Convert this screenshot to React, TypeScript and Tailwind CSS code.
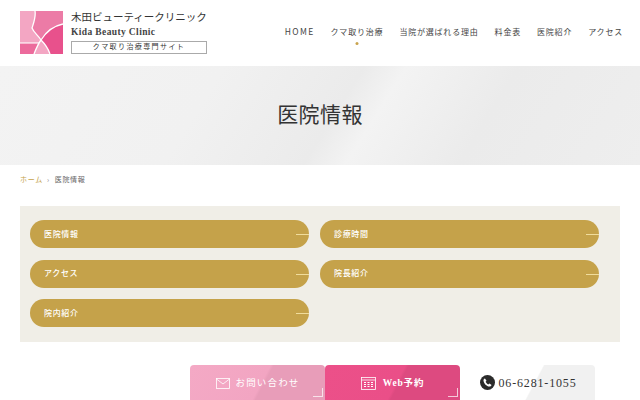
const NAV = ["HOME", "クマ取り治療", "当院が選ばれる理由", "料金表", "医院紹介", "アクセス"];
const PILLS = ["医院情報", "診療時間", "アクセス", "院長紹介", "院内紹介"];

const SERIF = "font-['Liberation_Serif','Noto_Sans_CJK_JP',serif]";
const SANS = "font-['Noto_Sans_CJK_JP','Noto_Sans',sans-serif]";

function Logo() {
  return (
    <svg width="43" height="43" viewBox="0 0 43 43" className="shrink-0">
      <rect width="43" height="43" fill="#f3a6c3" />
      <path d="M15 0H43V13C33 15 26 21 21 29C18 24 14 22 12 17C14 11 16 6 15 0Z" fill="#ec7ba6" />
      <path d="M43 13V43H30C28 37 25 33 21 29C26 21 33 15 43 13Z" fill="#e8518c" />
      <path d="M0 32H18C17 36 15 40 14 43H0Z" fill="#ec6b9c" />
      <path d="M15 0C16 6 14 11 12 17C14 22 18 24 21 29C25 33 28 37 30 43" fill="none" stroke="#fff" strokeWidth="1.3" />
      <path d="M43 13C33 15 26 21 21 29C18 33 16 38 14 43" fill="none" stroke="#fff" strokeWidth="1.3" />
      <path d="M0 32H19" stroke="#fff" strokeWidth="1.1" />
    </svg>
  );
}

function Header() {
  return (
    <header className="flex h-[66px] items-start justify-between bg-white pl-5 pr-[17px]">
      <div className="mt-[11px] flex gap-2">
        <Logo />
        <div className={`w-[136px] ${SERIF} text-[#333]`}>
          <p className="text-[10.5px] leading-[14px] whitespace-nowrap">木田ビューティークリニック</p>
          <p className="mt-[1px] text-[9.5px] leading-[13px] font-bold tracking-[0.04em] text-[#444]">Kida Beauty Clinic</p>
          <p className="mt-[2px] border border-[#aaa] text-center text-[7px] leading-[11px] tracking-[0.2em] whitespace-nowrap">クマ取り治療専門サイト</p>
        </div>
      </div>
      <nav className={`mt-[25px] flex gap-[16px] text-[8px] leading-[13px] tracking-[0.1em] text-[#444] ${SANS}`}>
        {NAV.map((item, i) => (
          <div key={item} className={`relative whitespace-nowrap ${i === 0 ? "text-[8.5px] tracking-[0.16em]" : ""}`}>
            {item}
            {i === 1 && <span className="absolute top-[17px] left-1/2 h-[3px] w-[3px] -translate-x-1/2 rounded-full bg-[#c9a44e]" />}
          </div>
        ))}
      </nav>
    </header>
  );
}

function Hero() {
  return (
    <section className="flex h-[99px] items-center justify-center bg-[linear-gradient(122deg,#f3f3f3_0%,#f1f1f1_32%,#ebebeb_52%,#f3f3f3_58%,#ebebeb_74%,#eeeeee_100%)]">
      <h1 className={`text-[21px] leading-none tracking-[0.02em] text-[#333] ${SERIF}`}>医院情報</h1>
    </section>
  );
}

function Pill({ label }: { label: string }) {
  return (
    <a className={`relative flex h-7 items-center rounded-full bg-[#c5a24a] pb-[1px] pl-[14px] text-[8px] font-medium tracking-[0.08em] text-white ${SANS}`}>
      {label}
      <span className="absolute top-1/2 right-0 h-px w-[13px] bg-[#f0dc9c]" />
    </a>
  );
}

function Corner() {
  return <span className="absolute right-[2px] bottom-[18px] h-[9px] w-[10px] border-r border-b border-white/70" />;
}

export default function App() {
  return (
    <div className="h-[400px] w-[640px] overflow-hidden bg-white">
      <Header />
      <Hero />
      <div className={`mt-[9px] flex items-center gap-[5px] pl-5 text-[7px] leading-[11px] tracking-[0.1em] ${SANS}`}>
        <span className="text-[#c5a24a]">ホーム</span>
        <span className="-ml-[1px] text-[#888]">›</span>
        <span className="text-[#666]">医院情報</span>
      </div>
      <section className="mx-5 mt-[21px] grid h-[136px] grid-cols-[279px_279px] content-start gap-x-[11px] gap-y-[11.5px] bg-[#f0eee7] px-[10px] pt-[14px]">
        {PILLS.map((p) => (
          <Pill key={p} label={p} />
        ))}
      </section>
      <div className="mt-[23px] ml-[190px] flex">
        <a className={`relative flex h-[50px] w-[135px] items-start justify-center gap-[6px] rounded-t-[4px] bg-[linear-gradient(118deg,#f4a9c5_0%,#f2a5c2_50%,#e89db9_52%,#e89db9_100%)] pt-[11px] text-[9.5px] leading-[14px] tracking-[0.12em] text-white ${SERIF}`}>
          <svg width="14" height="11" viewBox="0 0 14 11" fill="none" stroke="#fff" strokeWidth="0.8" className="mt-[2px]">
            <rect x="0.5" y="0.5" width="13" height="10" />
            <path d="M0.5 1L7 6L13.5 1" />
          </svg>
          お問い合わせ
          <Corner />
        </a>
        <a className={`relative flex h-[50px] w-[135px] items-start justify-center gap-[7px] rounded-t-[4px] bg-[linear-gradient(118deg,#ec5089_0%,#ea4f88_50%,#dd4a80_52%,#dd4a80_100%)] pt-[11px] text-[9.5px] leading-[14px] font-bold tracking-[0.08em] text-white ${SERIF}`}>
          <svg width="15" height="13" viewBox="0 0 15 13" fill="none" stroke="#fff" strokeWidth="0.8" className="mt-[1px]">
            <rect x="0.5" y="0.5" width="14" height="12" />
            <path d="M0.5 3H14.5" />
            <path d="M3 5.5H5M6.5 5.5H8.5M10 5.5H12M3 7.5H5M6.5 7.5H8.5M10 7.5H12M3 9.5H5M6.5 9.5H8.5M10 9.5H12" strokeWidth="1.2" />
          </svg>
          Web予約
          <Corner />
        </a>
        <a className={`ml-[5px] flex h-[50px] w-[130px] items-start justify-center gap-[3px] rounded-t-[4px] bg-[linear-gradient(118deg,#ffffff_0%,#ffffff_50%,#f1f1f1_51%,#f1f1f1_100%)] pt-[10px] pr-[3px] text-[12px] leading-[16px] tracking-[0.07em] text-[#333] ${SERIF}`}>
          <svg width="15" height="15" viewBox="0 0 24 24" className="shrink-0">
            <circle cx="12" cy="12" r="12" fill="#2b2b2b" />
            <path d="M8 5.5L10.4 9L9 10.8C9.8 12.6 11.4 14.2 13.2 15L15 13.6L18.5 16C18 17.6 16.6 18.6 15 18.4C10.4 17.8 6.2 13.6 5.6 9C5.4 7.4 6.4 6 8 5.5Z" fill="#fff" />
          </svg>
          06-6281-1055
        </a>
      </div>
    </div>
  );
}
